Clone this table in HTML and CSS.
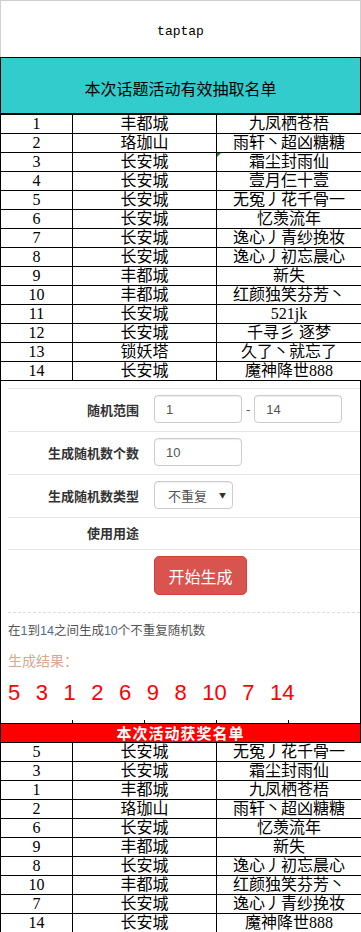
FILE: index.html
```html
<!DOCTYPE html>
<html lang="zh-CN">
<head>
<meta charset="utf-8">
<title>taptap</title>
<link rel="stylesheet" href="styles.css">
</head>
<body>
<div class="page">
  <header class="top">taptap</header>
  <div class="band">本次话题活动有效抽取名单</div>
  <table class="list">
    <colgroup><col class="c1"><col class="c2"><col class="c3"></colgroup>
    <tbody>
      <tr><td>1</td><td>丰都城</td><td>九凤栖苍梧</td></tr>
      <tr><td>2</td><td>珞珈山</td><td>雨轩丶超凶糖糖</td></tr>
      <tr><td>3</td><td>长安城</td><td class="note">霜尘封雨仙</td></tr>
      <tr><td>4</td><td>长安城</td><td>壹月仨十壹</td></tr>
      <tr><td>5</td><td>长安城</td><td>无冤丿花千骨一</td></tr>
      <tr><td>6</td><td>长安城</td><td>忆羡流年</td></tr>
      <tr><td>7</td><td>长安城</td><td>逸心丿青纱挽妆</td></tr>
      <tr><td>8</td><td>长安城</td><td>逸心丿初忘晨心</td></tr>
      <tr><td>9</td><td>丰都城</td><td>新失</td></tr>
      <tr><td>10</td><td>丰都城</td><td>红颜独笑芬芳丶</td></tr>
      <tr><td>11</td><td>长安城</td><td>521jk</td></tr>
      <tr><td>12</td><td>长安城</td><td>千寻彡 逐梦</td></tr>
      <tr><td>13</td><td>锁妖塔</td><td>久了丶就忘了</td></tr>
      <tr><td>14</td><td>长安城</td><td>魔神降世888</td></tr>
    </tbody>
  </table>
  <section class="panel">
    <form class="form">
      <div class="row">
        <label class="lbl">随机范围</label>
        <div class="ctrl">
          <input class="inp" type="text" value="1">
          <span class="dash">-</span>
          <input class="inp" type="text" value="14">
        </div>
      </div>
      <div class="row">
        <label class="lbl">生成随机数个数</label>
        <div class="ctrl"><input class="inp" type="text" value="10"></div>
      </div>
      <div class="row">
        <label class="lbl">生成随机数类型</label>
        <div class="ctrl"><div class="select"><span>不重复</span><span class="caret">▼</span></div></div>
      </div>
      <div class="row">
        <label class="lbl">使用用途</label>
        <div class="ctrl"></div>
      </div>
      <div class="row btnrow">
        <span></span>
        <div class="ctrl"><button class="btn" type="button">开始生成</button></div>
      </div>
    </form>
    <div class="result">
      <p class="desc">在<em>1</em>到<em>14</em>之间生成<em>10</em>个不重复随机数</p>
      <p class="rt">生成结果：</p>
      <div class="nums"><span>5</span><span>3</span><span>1</span><span>2</span><span>6</span><span>9</span><span>8</span><span>10</span><span>7</span><span>14</span></div>
    </div>
    <div class="ticks"><span></span><span></span><span></span><span></span><span></span></div>
  </section>
  <div class="redband">本次活动获奖名单</div>
  <table class="list">
    <colgroup><col class="c1"><col class="c2"><col class="c3"></colgroup>
    <tbody>
      <tr><td>5</td><td>长安城</td><td>无冤丿花千骨一</td></tr>
      <tr><td>3</td><td>长安城</td><td>霜尘封雨仙</td></tr>
      <tr><td>1</td><td>丰都城</td><td>九凤栖苍梧</td></tr>
      <tr><td>2</td><td>珞珈山</td><td>雨轩丶超凶糖糖</td></tr>
      <tr><td>6</td><td>长安城</td><td>忆羡流年</td></tr>
      <tr><td>9</td><td>丰都城</td><td>新失</td></tr>
      <tr><td>8</td><td>长安城</td><td>逸心丿初忘晨心</td></tr>
      <tr><td>10</td><td>丰都城</td><td>红颜独笑芬芳丶</td></tr>
      <tr><td>7</td><td>长安城</td><td>逸心丿青纱挽妆</td></tr>
      <tr><td>14</td><td>长安城</td><td>魔神降世888</td></tr>
    </tbody>
  </table>
</div>
</body>
</html>
```
FILE: styles.css
```css
html, body {
  margin: 0;
  padding: 0;
  background: #fff;
}
.page {
  width: 361px;
}
.top {
  box-sizing: border-box;
  height: 57px;
  border: 1px solid #d0d0d0;
  border-bottom: 0;
  padding-top: 23px;
  text-align: center;
  font: 13px/16px "Liberation Mono", "DejaVu Sans Mono", monospace;
  color: #000;
}
.band {
  box-sizing: border-box;
  height: 57px;
  border: 1px solid #000;
  background: #33cccc;
  padding-top: 19px;
  text-align: center;
  font: 16px/22px "Noto Sans CJK SC", sans-serif;
  color: #000;
}
.list {
  border-collapse: collapse;
  table-layout: fixed;
  width: 361px;
  font: 16px/18px "Liberation Serif", "Noto Sans CJK SC", serif;
  color: #000;
}
.list .c1 { width: 72px; }
.list .c2 { width: 144px; }
.list .c3 { width: 145px; }
.list td {
  border: 1px solid #000;
  height: 18px;
  padding: 0;
  text-align: center;
  white-space: nowrap;
  overflow: hidden;
}
.list td.note {
  position: relative;
}
.list td.note::before {
  content: "";
  position: absolute;
  left: 0;
  top: 0;
  border-top: 4px solid #0a8a1e;
  border-right: 4px solid transparent;
}
.panel {
  border-left: 1px solid #000;
  border-right: 1px solid #000;
  padding-top: 7px;
}
.form {
  margin: 0 0 0 7px;
  font-family: "Noto Sans CJK SC", sans-serif;
}
.row {
  display: grid;
  grid-template-columns: 131px 1fr;
  column-gap: 15px;
  align-items: center;
  border-top: 1px solid #e5e5e5;
  padding: 6px 0 8px;
}
.lbl {
  text-align: right;
  font-size: 13px;
  line-height: 17px;
  font-weight: 700;
  color: #333;
}
.ctrl {
  display: flex;
  align-items: center;
  gap: 4px;
  min-height: 17px;
}
.inp {
  box-sizing: border-box;
  width: 88px;
  height: 28px;
  margin: 0;
  padding: 0 11px;
  border: 1px solid #ccc;
  border-radius: 4px;
  box-shadow: inset 0 1px 1px rgba(0,0,0,.075);
  font: 13px "Liberation Sans", Arial, sans-serif;
  color: #555;
  background: #fff;
}
.dash {
  font: 13px "Liberation Sans", Arial, sans-serif;
  color: #555;
}
.select {
  box-sizing: border-box;
  width: 79px;
  height: 28px;
  display: flex;
  align-items: center;
  justify-content: space-between;
  padding: 0 6px 0 13px;
  border: 1px solid #ccc;
  border-radius: 4px;
  box-shadow: inset 0 1px 1px rgba(0,0,0,.075);
  font-size: 13px;
  color: #555;
}
.caret {
  font-size: 7px;
  color: #333;
}
.btnrow {
  padding-bottom: 17px;
  border-bottom: 1px dashed #ddd;
}
.btn {
  width: 93px;
  height: 39px;
  margin: 0;
  padding: 0;
  border: 1px solid #d43f3a;
  border-radius: 5px;
  background: #d9534f;
  color: #fff;
  font: 16px "Noto Sans CJK SC", sans-serif;
}
.result {
  padding: 7px 0 0 7px;
}
.desc {
  margin: 0;
  font: 12.5px/20px "Noto Sans CJK SC", sans-serif;
  color: #555;
}
.desc em {
  font-style: normal;
  font-family: "Liberation Sans", Arial, sans-serif;
  color: #4d6b8c;
}
.rt {
  margin: 9px 0 0;
  font: 14px/20px "Noto Sans CJK SC", serif;
  color: #d9a88e;
}
.nums {
  display: flex;
  gap: 15.5px;
  margin-top: 10px;
  font: 22px/26px "Liberation Sans", Arial, sans-serif;
  color: #f00;
}
.ticks {
  display: grid;
  grid-template-columns: repeat(5, 72px);
  height: 3px;
  margin-top: 14px;
}
.ticks span {
  border-right: 1px solid #000;
}
.ticks span:last-child {
  border-right: 0;
}
.redband {
  border: 1px solid #000;
  border-bottom: 0;
  background: #f00;
  text-align: center;
  font: 700 15px/18px "Noto Sans CJK SC", sans-serif;
  letter-spacing: 1px;
  color: #fff;
  height: 18px;
}
```
